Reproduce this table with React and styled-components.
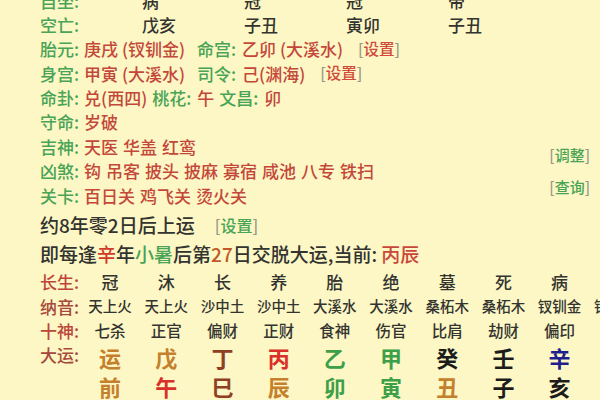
import styled, { createGlobalStyle } from "styled-components";

const GlobalStyle = createGlobalStyle`
  html, body {
    margin: 0;
    padding: 0;
  }
  body {
    background: #fcf7c4;
    font-family: "Noto Sans CJK SC", "Noto Sans", sans-serif;
    font-weight: 500;
    overflow: hidden;
  }
`;

const GREEN = "#4aa457";
const RED = "#c4473b";
const DARK = "#333330";

const Page = styled.div`
  width: 600px;
  height: 400px;
  overflow: hidden;
  box-sizing: border-box;
  padding-left: 40px;
  white-space: nowrap;
  background: #fcf7c4;
`;

// the view is scrolled a little: the first row is cut by the top edge
const Scroll = styled.div`
  margin-top: -12.2px;
`;

const Row = styled.div`
  display: flex;
  align-items: center;
  height: 24.4px;
  font-size: 17px;
  line-height: 1;
`;

const PillarRow = styled.div`
  display: grid;
  grid-template-columns: repeat(5, 102px);
  align-items: center;
  height: 24.4px;
  font-size: 17px;
  line-height: 1;
  color: ${DARK};
`;

const Label = styled.span`
  color: ${(p) => (p.$tone === "red" ? "#bd463b" : p.$tone === "brown" ? "#a8473c" : GREEN)};
  margin-left: ${(p) => p.$ml || 0}px;
`;

const Value = styled.span`
  color: ${(p) => p.$color || RED};
  margin-left: ${(p) => p.$ml ?? 5}px;
`;

const Words = styled.span`
  display: inline-flex;
  gap: 5px;
  color: ${RED};
  margin-left: 5px;
`;

const Action = styled.span`
  color: ${(p) => p.$color};
  font-size: ${(p) => p.$size || 15.5}px;
  margin-left: ${(p) => p.$ml || 0}px;
  &::before {
    content: "[";
    color: #9a9888;
  }
  &::after {
    content: "]";
    color: #9a9888;
  }
`;

const Split = styled.div`
  display: flex;
  justify-content: space-between;
  padding-right: 10px;
`;

const SideLinks = styled.div`
  display: flex;
  flex-direction: column;
  align-items: flex-end;
  padding-top: 11px;
  gap: 12px;
  line-height: 20px;
`;

const InfoBlock = styled.div`
  margin-top: 3px;
  margin-bottom: 1.3px;
`;

const InfoLine = styled.div`
  display: flex;
  align-items: center;
  height: 29px;
  font-size: 19px;
  line-height: 1;
  color: ${DARK};
`;

const Hl = styled.span`
  color: ${(p) => p.$color};
`;

const TableRow = styled.div`
  display: grid;
  grid-template-columns: 42px repeat(10, 56.2px);
  align-items: center;
  height: 24.4px;
  font-size: 17px;
  line-height: 1;
`;

const Cell = styled.span`
  text-align: center;
  font-size: ${(p) => p.$size}px;
  color: ${DARK};
`;

const DayunRow = styled.div`
  display: grid;
  grid-template-columns: 42px repeat(10, 56.2px);
  align-items: start;
  font-size: 17px;
`;

const DayunLabel = styled.span`
  color: #a8473c;
  line-height: 24.4px;
`;

const DayunCell = styled.div`
  display: flex;
  flex-direction: column;
  align-items: center;
  font-size: 22px;
  font-weight: bold;
  line-height: 29px;
`;

const Gan = styled.span`
  color: ${(p) => p.$color};
`;

const pillars = [
  { label: "自坐:", cells: ["病", "冠", "冠", "帝"] },
  { label: "空亡:", cells: ["戊亥", "子丑", "寅卯", "子丑"] },
];

const stages = ["冠", "沐", "长", "养", "胎", "绝", "墓", "死", "病", "衰"];
const nayin = ["天上火", "天上火", "沙中土", "沙中土", "大溪水", "大溪水", "桑柘木", "桑柘木", "钗钏金", "钗钏金"];
const gods = ["七杀", "正官", "偏财", "正财", "食神", "伤官", "比肩", "劫财", "偏印", "正印"];

const BROWN = "#c4802c";
const FIRE = "#d9302a";
const DEEP = "#8f3f24";
const WOOD = "#3d9f48";
const INK = "#1c1c1c";
const NAVY = "#1e1e8c";

const dayun = [
  ["运", BROWN, "前", BROWN],
  ["戊", BROWN, "午", FIRE],
  ["丁", DEEP, "巳", DEEP],
  ["丙", FIRE, "辰", BROWN],
  ["乙", WOOD, "卯", WOOD],
  ["甲", WOOD, "寅", WOOD],
  ["癸", INK, "丑", BROWN],
  ["壬", INK, "子", INK],
  ["辛", NAVY, "亥", INK],
  ["庚", "#c9a020", "戌", BROWN],
];

export default function App() {
  return (
    <Page>
      <GlobalStyle />
      <Scroll>
        {pillars.map((p) => (
          <PillarRow key={p.label}>
            <Label>{p.label}</Label>
            {p.cells.map((c, i) => (
              <span key={i}>{c}</span>
            ))}
          </PillarRow>
        ))}
        <Row>
          <Label>胎元:</Label>
          <Value>庚戌 (钗钏金)</Value>
          <Label $ml={12}>命宫:</Label>
          <Value $ml={6}>乙卯 (大溪水)</Value>
          <Action $ml={15} $color="#d0493b">设置</Action>
        </Row>
        <Row>
          <Label>身宫:</Label>
          <Value>甲寅 (大溪水)</Value>
          <Label $ml={12}>司令:</Label>
          <Value $ml={6}>己(渊海)</Value>
          <Action $ml={15} $color="#d0493b">设置</Action>
        </Row>
        <Row>
          <Label>命卦:</Label>
          <Value>兑(西四)</Value>
          <Label $ml={5}>桃花:</Label>
          <Value $ml={6}>午</Value>
          <Label $ml={5}>文昌:</Label>
          <Value $ml={6}>卯</Value>
        </Row>
        <Row>
          <Label>守命:</Label>
          <Value>岁破</Value>
        </Row>
        <Split>
          <div>
            <Row>
              <Label>吉神:</Label>
              <Words>
                <span>天医</span>
                <span>华盖</span>
                <span>红鸾</span>
              </Words>
            </Row>
            <Row>
              <Label>凶煞:</Label>
              <Words>
                {["钩", "吊客", "披头", "披麻", "寡宿", "咸池", "八专", "铁扫"].map((w) => (
                  <span key={w}>{w}</span>
                ))}
              </Words>
            </Row>
            <Row>
              <Label>关卡:</Label>
              <Words>
                <span>百日关</span>
                <span>鸡飞关</span>
                <span>烫火关</span>
              </Words>
            </Row>
          </div>
          <SideLinks>
            <Action $color={GREEN} $size={15}>调整</Action>
            <Action $color={GREEN} $size={15}>查询</Action>
          </SideLinks>
        </Split>
        <InfoBlock>
          <InfoLine>
            约8年零2日后上运
            <Action $ml={20} $color={GREEN} $size={16}>设置</Action>
          </InfoLine>
          <InfoLine>
            即每逢<Hl $color="#cf3b2b">辛</Hl>年<Hl $color={GREEN}>小暑</Hl>后第
            <Hl $color="#c0582a">27</Hl>日交脱大运,当前:&nbsp;<Hl $color="#c9463b">丙辰</Hl>
          </InfoLine>
        </InfoBlock>
        <TableRow>
          <Label $tone="red">长生:</Label>
          {stages.map((s, i) => (
            <Cell key={i} $size={17}>{s}</Cell>
          ))}
        </TableRow>
        <TableRow>
          <Label $tone="brown">纳音:</Label>
          {nayin.map((s, i) => (
            <Cell key={i} $size={14.5}>{s}</Cell>
          ))}
        </TableRow>
        <TableRow>
          <Label $tone="red">十神:</Label>
          {gods.map((s, i) => (
            <Cell key={i} $size={15.5}>{s}</Cell>
          ))}
        </TableRow>
        <DayunRow>
          <DayunLabel>大运:</DayunLabel>
          {dayun.map(([g, gc, z, zc], i) => (
            <DayunCell key={i}>
              <Gan $color={gc}>{g}</Gan>
              <Gan $color={zc}>{z}</Gan>
            </DayunCell>
          ))}
        </DayunRow>
      </Scroll>
    </Page>
  );
}
